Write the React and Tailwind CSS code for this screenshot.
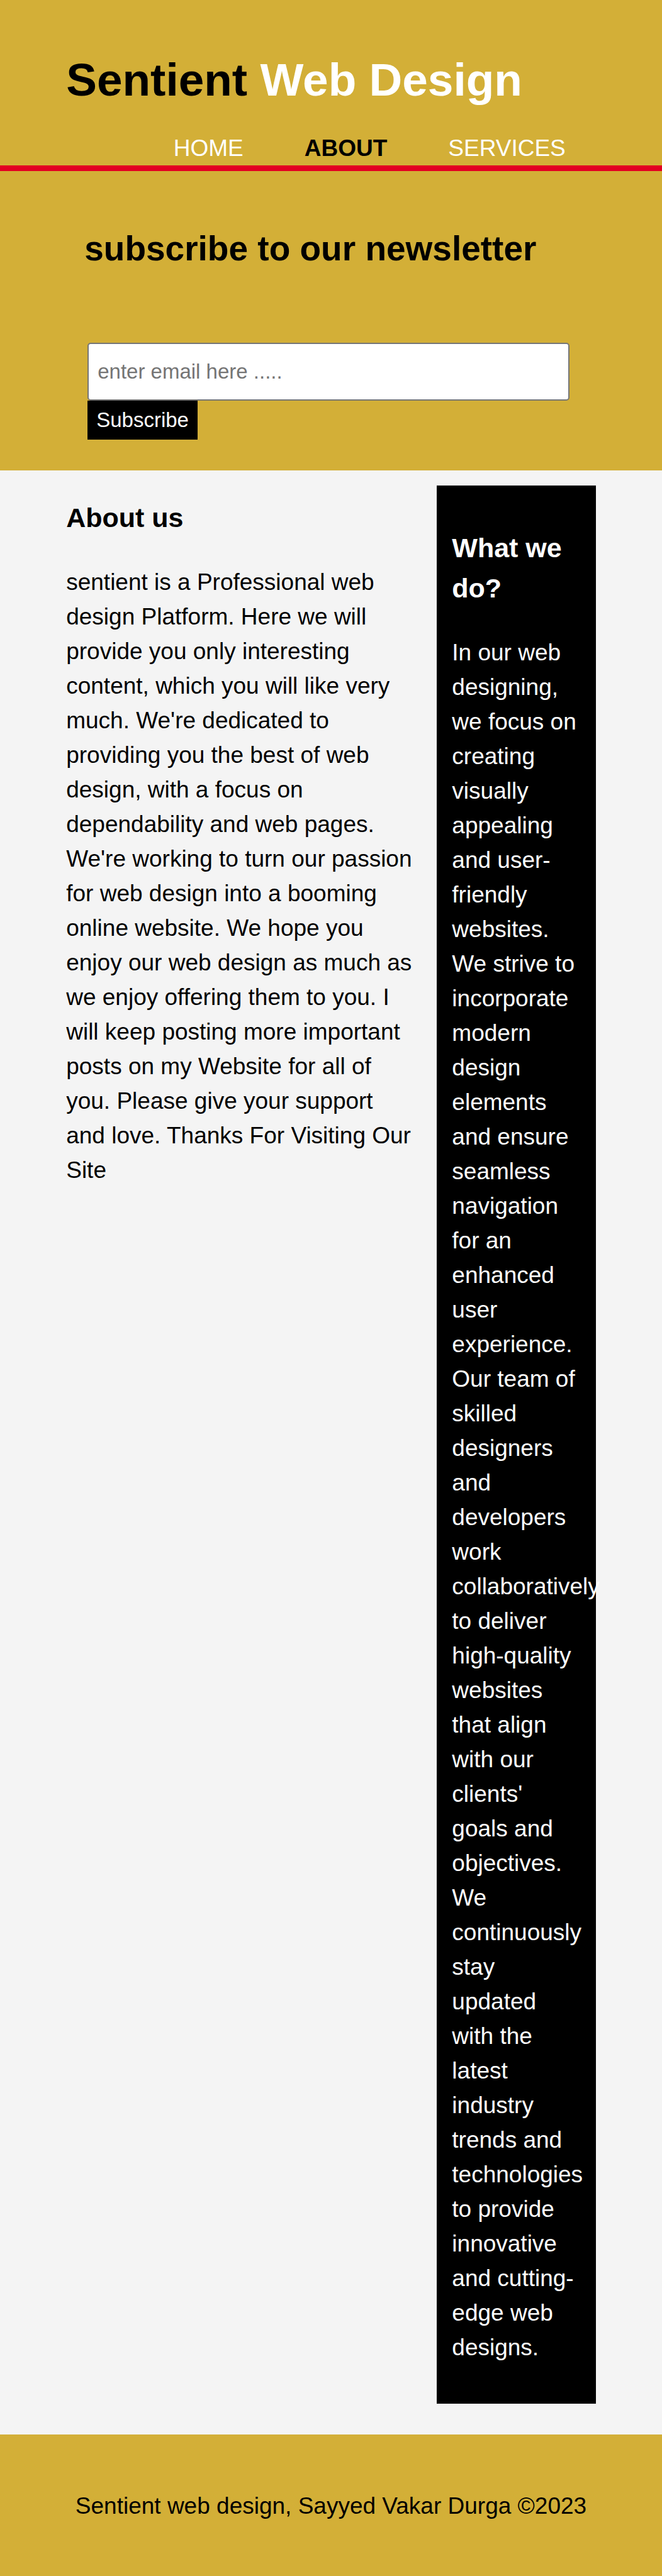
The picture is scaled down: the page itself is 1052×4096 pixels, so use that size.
const navItems = [
  { label: "HOME", active: false },
  { label: "ABOUT", active: true },
  { label: "SERVICES", active: false },
];

function Header() {
  return (
    <header className="border-b-[9px] border-[#e30022] bg-[#d3af37] pt-[72px]">
      <div className="mx-auto w-4/5">
        <h1 className="text-[73px] leading-[110px] font-bold">
          Sentient <span className="text-white">Web Design</span>
        </h1>
        <nav className="mt-[26px] pr-12">
          <ul className="flex justify-end gap-[97px]">
            {navItems.map((item) => (
              <li key={item.label}>
                <a
                  href="#"
                  className={item.active ? "font-bold text-black" : "text-white"}
                >
                  {item.label}
                </a>
              </li>
            ))}
          </ul>
        </nav>
      </div>
    </header>
  );
}

function Newsletter() {
  return (
    <section className="bg-[#d3af37] pt-[82px] pb-[49px]">
      <div className="mx-auto w-4/5">
        <h2 className="pl-[29px] text-[55px] leading-[83px] font-bold">
          subscribe to our newsletter
        </h2>
        <form
          className="mt-[108px] flex flex-col items-start pr-[42px] pl-[34px]"
          onSubmit={(event) => event.preventDefault()}
        >
          <input
            type="email"
            aria-label="Email address"
            placeholder="enter email here ....."
            className="h-[92px] w-full rounded-[5px] border-2 border-[#767676] bg-white px-[14px] text-[33px] placeholder:text-[#757575]"
          />
          <button
            type="submit"
            className="h-[62px] bg-black px-[14px] text-[33px] leading-[62px] text-white"
          >
            Subscribe
          </button>
        </form>
      </div>
    </section>
  );
}

function Main() {
  return (
    <main className="mx-auto flex w-4/5 items-start justify-between pt-6 pb-[49px]">
      <article className="w-[66%] pt-[19px]">
        <h3 className="text-[43px] leading-[64px] font-bold">About us</h3>
        <p className="mt-[43px]">
          sentient is a Professional web design Platform. Here we will provide
          you only interesting content, which you will like very much. We're
          dedicated to providing you the best of web design, with a focus on
          dependability and web pages. We're working to turn our passion for web
          design into a booming online website. We hope you enjoy our web design
          as much as we enjoy offering them to you. I will keep posting more
          important posts on my Website for all of you. Please give your support
          and love. Thanks For Visiting Our Site
        </p>
      </article>
      <aside className="w-[30%] bg-black px-6 pt-[67px] pb-[62px] text-white">
        <h3 className="text-[43px] leading-[64px] font-bold">What we do?</h3>
        <p className="mt-[43px]">
          In our web designing, we focus on creating visually appealing and
          user-friendly websites. We strive to incorporate modern design elements
          and ensure seamless navigation for an enhanced user experience. Our
          team of skilled designers and developers work collaboratively to
          deliver high-quality websites that align with our clients' goals and
          objectives. We continuously stay updated with the latest industry
          trends and technologies to provide innovative and cutting-edge web
          designs.
        </p>
      </aside>
    </main>
  );
}

export default function App() {
  return (
    <div className="bg-[#f4f4f4] font-['Liberation_Sans',Arial,sans-serif] text-[37px] leading-[55px] text-black">
      <Header />
      <Newsletter />
      <Main />
      <footer className="bg-[#d3af37] pt-[86px] pb-[84px] text-center">
        <p>Sentient web design, Sayyed Vakar Durga ©2023</p>
      </footer>
    </div>
  );
}
